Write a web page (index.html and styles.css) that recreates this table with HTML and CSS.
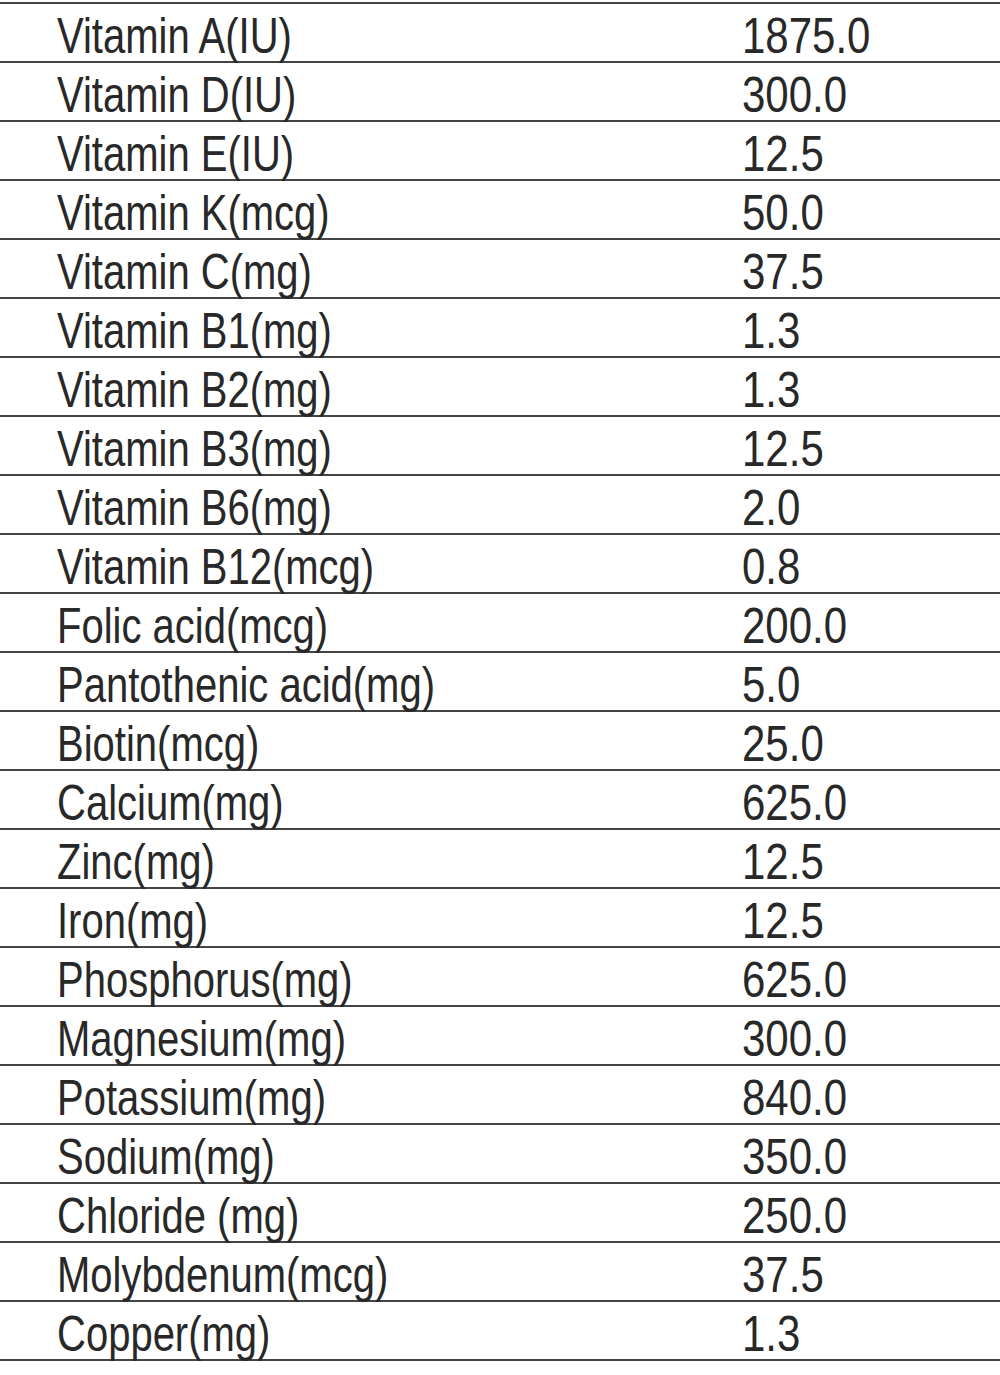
FILE: index.html
```html
<!DOCTYPE html>
<html lang="en">
<head>
<meta charset="utf-8">
<title>Nutrition table</title>
<link rel="stylesheet" href="styles.css">
</head>
<body>
<div class="table">
  <div class="row"><span class="name">Vitamin A(IU)</span><span class="val">1875.0</span></div>
  <div class="row"><span class="name">Vitamin D(IU)</span><span class="val">300.0</span></div>
  <div class="row"><span class="name">Vitamin E(IU)</span><span class="val">12.5</span></div>
  <div class="row"><span class="name">Vitamin K(mcg)</span><span class="val">50.0</span></div>
  <div class="row"><span class="name">Vitamin C(mg)</span><span class="val">37.5</span></div>
  <div class="row"><span class="name">Vitamin B1(mg)</span><span class="val">1.3</span></div>
  <div class="row"><span class="name">Vitamin B2(mg)</span><span class="val">1.3</span></div>
  <div class="row"><span class="name">Vitamin B3(mg)</span><span class="val">12.5</span></div>
  <div class="row"><span class="name">Vitamin B6(mg)</span><span class="val">2.0</span></div>
  <div class="row"><span class="name">Vitamin B12(mcg)</span><span class="val">0.8</span></div>
  <div class="row"><span class="name">Folic acid(mcg)</span><span class="val">200.0</span></div>
  <div class="row"><span class="name">Pantothenic acid(mg)</span><span class="val">5.0</span></div>
  <div class="row"><span class="name">Biotin(mcg)</span><span class="val">25.0</span></div>
  <div class="row"><span class="name">Calcium(mg)</span><span class="val">625.0</span></div>
  <div class="row"><span class="name">Zinc(mg)</span><span class="val">12.5</span></div>
  <div class="row"><span class="name">Iron(mg)</span><span class="val">12.5</span></div>
  <div class="row"><span class="name">Phosphorus(mg)</span><span class="val">625.0</span></div>
  <div class="row"><span class="name">Magnesium(mg)</span><span class="val">300.0</span></div>
  <div class="row"><span class="name">Potassium(mg)</span><span class="val">840.0</span></div>
  <div class="row"><span class="name">Sodium(mg)</span><span class="val">350.0</span></div>
  <div class="row"><span class="name">Chloride (mg)</span><span class="val">250.0</span></div>
  <div class="row"><span class="name">Molybdenum(mcg)</span><span class="val">37.5</span></div>
  <div class="row"><span class="name">Copper(mg)</span><span class="val">1.3</span></div>
</div>
</body>
</html>
```

FILE: styles.css
```css
html, body {
  margin: 0;
  padding: 0;
  background: #ffffff;
}

body {
  font-family: "Liberation Sans", Arial, sans-serif;
  color: #282828;
}

.table {
  margin-top: 2px;
  border-top: 2px solid #444444;
  display: flex;
  flex-direction: column;
}

.row {
  box-sizing: border-box;
  height: 59px;
  padding-top: 4px;
  padding-left: 57px;
  border-bottom: 2px solid #444444;
  display: grid;
  grid-template-columns: 685px 1fr;
  align-items: start;
  font-size: 50px;
  line-height: 57px;
  white-space: nowrap;
}

.name,
.val {
  display: inline-block;
  transform-origin: left center;
}

.name {
  transform: scaleX(0.80);
}

.val {
  transform: scaleX(0.84);
}
```
